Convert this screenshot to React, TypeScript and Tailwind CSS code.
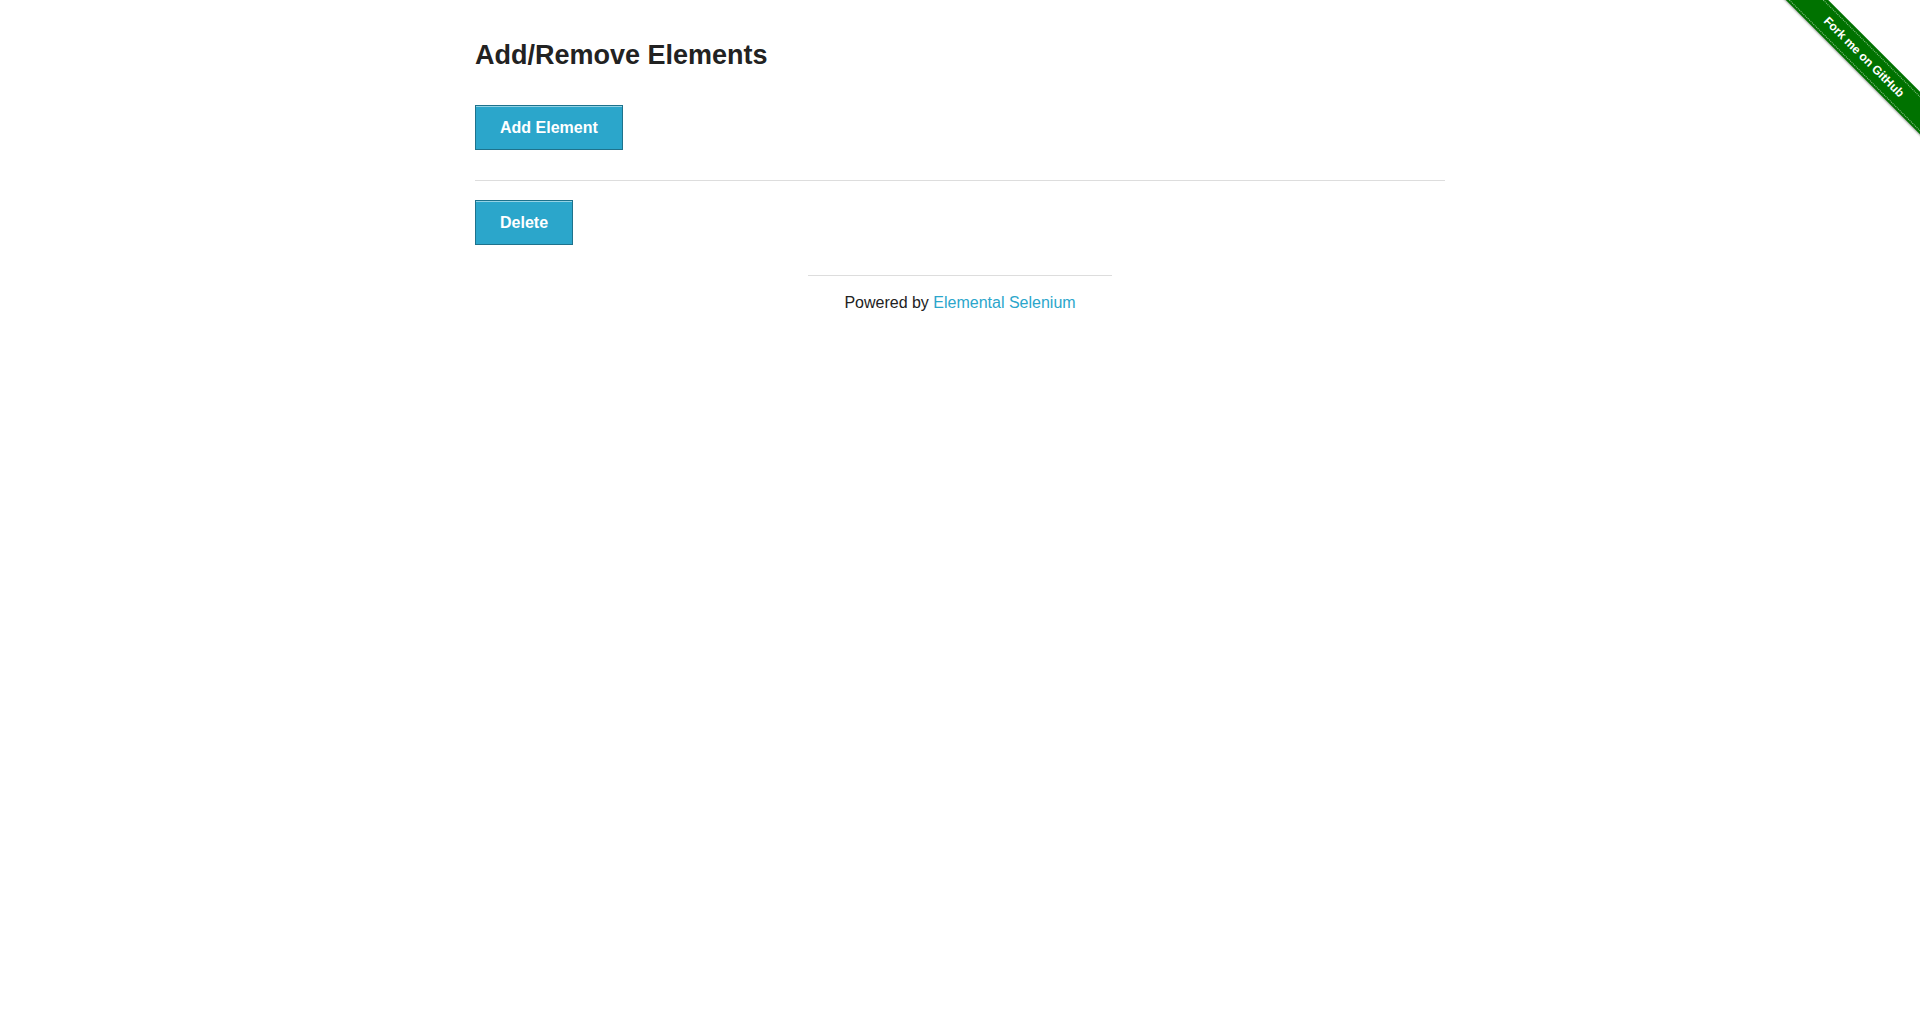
import React from "react";

export default function App() {
  return (
    <div className="min-h-[1028px] w-full bg-white text-[#222222] font-['Liberation_Sans',Arial,sans-serif] relative">
      <div className="absolute top-0 right-0 w-[149px] h-[149px] overflow-hidden">
        <div className="absolute left-[-17px] top-[42px] w-[220px] h-[30px] rotate-45 bg-[#007200] flex items-center justify-center shadow-[0_1px_2px_rgba(0,0,0,0.35)]">
          <div className="w-full h-[25px] border-y border-dotted border-[#ffffff90] flex items-center justify-center">
            <span className="text-white text-[12px] leading-none font-bold">Fork me on GitHub</span>
          </div>
        </div>
      </div>

      <div className="w-[970px] mx-auto pt-[37px]">
        <h3 className="text-[27px] leading-[1.4] font-bold text-[#222222]">Add/Remove Elements</h3>
        <div className="mt-[30px]">
          <button className="h-[45px] px-[24px] pt-[2px] flex items-center bg-[#2ba6cb] border border-[#1e728c] shadow-[inset_0_1px_0_rgba(255,255,255,0.5)] text-white text-[16px] font-bold">
            Add Element
          </button>
        </div>
        <div className="mt-[30px] h-px bg-[#dddddd]" />
        <div className="mt-[19px]">
          <button className="h-[45px] px-[24px] pt-[2px] flex items-center bg-[#2ba6cb] border border-[#1e728c] shadow-[inset_0_1px_0_rgba(255,255,255,0.5)] text-white text-[16px] font-bold">
            Delete
          </button>
        </div>
      </div>

      <div className="mt-[30px] flex flex-col items-center">
        <div className="w-[304px] h-px bg-[#dddddd]" />
        <div className="mt-[14px] text-[16px] leading-[1.6] text-[#222222]">
          Powered by <a className="text-[#2ba6cb]" href="#">Elemental Selenium</a>
        </div>
      </div>
    </div>
  );
}
